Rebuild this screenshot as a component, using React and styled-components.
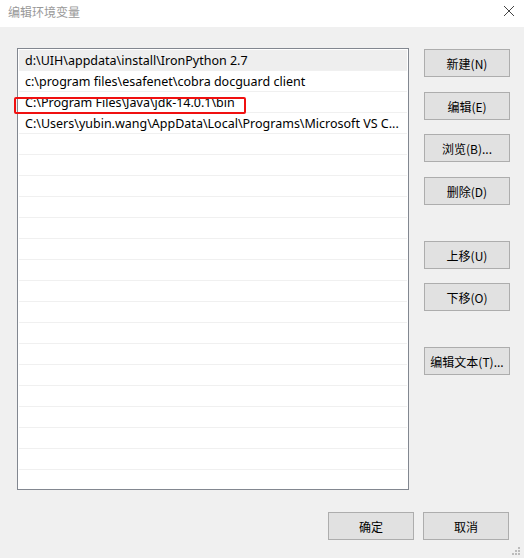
import React from 'react';
import styled, { createGlobalStyle } from 'styled-components';

const GlobalStyle = createGlobalStyle`
  html, body {
    margin: 0;
    padding: 0;
    background: #f0f0f0;
  }
  * {
    box-sizing: border-box;
  }
`;

const paths = [
  'd:\\UIH\\appdata\\install\\IronPython 2.7',
  'c:\\program files\\esafenet\\cobra docguard client',
  'C:\\Program Files\\Java\\jdk-14.0.1\\bin',
  'C:\\Users\\yubin.wang\\AppData\\Local\\Programs\\Microsoft VS C...',
];

const sideButtons = [
  { label: '新建(N)', top: 1 },
  { label: '编辑(E)', top: 15 },
  { label: '浏览(B)...', top: 14 },
  { label: '删除(D)', top: 15 },
  { label: '上移(U)', top: 36 },
  { label: '下移(O)', top: 14 },
  { label: '编辑文本(T)...', top: 36 },
];

const App = () => {
  const rows = [];
  for (let i = 0; i < 21; i++) {
    rows.push(paths[i] || '');
  }

  return (
    <Window>
      <GlobalStyle />
      <TitleBar>
        <Title>编辑环境变量</Title>
        <CloseIcon width='12' height='12' viewBox='0 0 12 12'>
          <path d='M1 1 L11 11 M11 1 L1 11' stroke='#444' strokeWidth='1' />
        </CloseIcon>
      </TitleBar>
      <Body>
        <Main>
          <ListWrap>
            <ListBox>
              {rows.map((text, i) => (
                <Row key={i} selected={i === 0}>
                  {text}
                </Row>
              ))}
            </ListBox>
            <Highlight />
          </ListWrap>
          <SideColumn>
            {sideButtons.map((b) => (
              <Button key={b.label} top={b.top}>
                {b.label}
              </Button>
            ))}
          </SideColumn>
        </Main>
        <Footer>
          <Button>确定</Button>
          <Button>取消</Button>
        </Footer>
        <Grip width='9' height='9' viewBox='0 0 9 9'>
          <rect x='6' y='0' width='2' height='2' />
          <rect x='3' y='3' width='2' height='2' />
          <rect x='6' y='3' width='2' height='2' />
          <rect x='0' y='6' width='2' height='2' />
          <rect x='3' y='6' width='2' height='2' />
          <rect x='6' y='6' width='2' height='2' />
        </Grip>
      </Body>
    </Window>
  );
};

const Window = styled.div`
  width: 524px;
  height: 558px;
  display: flex;
  flex-direction: column;
  background: #f0f0f0;
  position: relative;
  overflow: hidden;
`;

const TitleBar = styled.div`
  height: 27px;
  background: #ffffff;
  display: flex;
  align-items: center;
  justify-content: space-between;
  padding: 0 9px 4px 8px;
`;

const Title = styled.div`
  font-family: 'Noto Sans CJK SC', sans-serif;
  font-size: 12px;
  color: #999999;
`;

const CloseIcon = styled.svg`
  display: block;
  margin-bottom: 1px;
`;

const Body = styled.div`
  flex: 1;
  padding: 21px 14px 0 17px;
`;

const Main = styled.div`
  display: flex;
  align-items: flex-start;
`;

const ListWrap = styled.div`
  position: relative;
`;

const ListBox = styled.div`
  width: 392px;
  height: 442px;
  border: 1px solid #828790;
  background: #ffffff;
  padding: 1px;
  overflow: hidden;
`;

const Row = styled.div`
  height: 21px;
  border-bottom: 1px solid #f0f0f0;
  background: ${(p) => (p.selected ? '#eeeeee' : '#ffffff')};
  padding-left: 6px;
  font-family: 'Noto Sans', 'Noto Sans CJK SC', sans-serif;
  font-size: 12.5px;
  line-height: 21px;
  color: #000000;
  white-space: nowrap;
`;

const Highlight = styled.div`
  position: absolute;
  left: -3px;
  top: 49px;
  width: 232px;
  height: 17px;
  border: 2px solid #f01010;
  border-radius: 2px;
`;

const SideColumn = styled.div`
  display: flex;
  flex-direction: column;
  margin-left: 15px;
`;

const Button = styled.div`
  width: 86px;
  height: 28px;
  margin-top: ${(p) => (p.top ? p.top : 0)}px;
  border: 1px solid #adadad;
  background: #e1e1e1;
  display: flex;
  align-items: center;
  justify-content: center;
  font-family: 'Noto Sans CJK SC', sans-serif;
  font-size: 12px;
  color: #000000;
`;

const Footer = styled.div`
  display: flex;
  justify-content: flex-end;
  gap: 9px;
  margin-top: 22px;
  padding-right: 1px;
`;

const Grip = styled.svg`
  position: absolute;
  right: 3px;
  bottom: 2px;
  fill: #bcbcbc;
`;

export default App;
